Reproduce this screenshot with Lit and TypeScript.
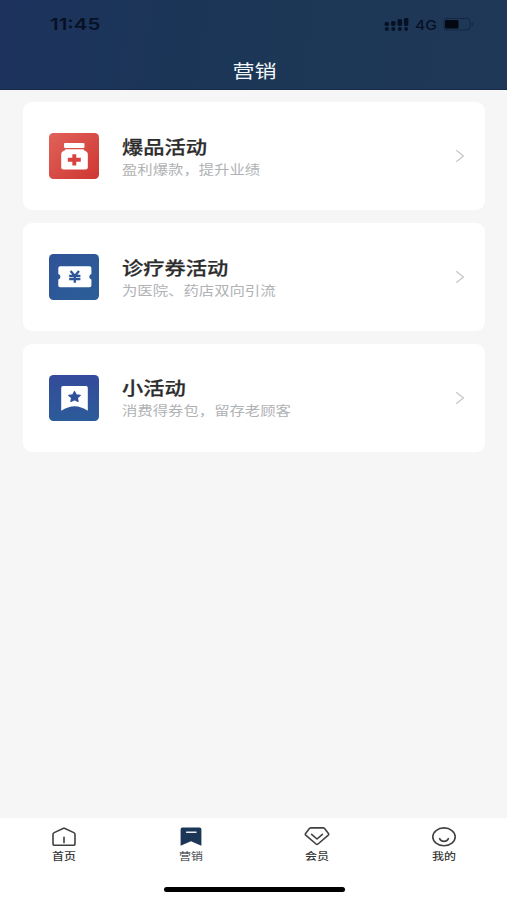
import { LitElement, html, css, svg } from "lit";
import { customElement } from "lit/decorators.js";

const bottle = svg`
  <defs><linearGradient id="r" x1="0" y1="0" x2="1" y2="1"><stop offset="0" stop-color="#e0625a"/><stop offset="1" stop-color="#cf3632"/></linearGradient></defs>
  <rect width="50" height="46" rx="4.5" fill="url(#r)"/>
  <rect x="15" y="10" width="20.5" height="5" rx="1" fill="#fff"/>
  <path d="M16.5 16.3H34.5Q34.5 17.6 36.5 18.1Q38.8 18.9 38.8 21.1V34.5Q38.8 36.6 36.6 36.6H14.4Q12.2 36.6 12.2 34.5V21.1Q12.2 18.9 14.4 18.1Q16.5 17.6 16.5 16.3Z" fill="#fff"/>
  <path d="M25.3 21.2v11.2M18.8 26.8h13" stroke="#d9423e" stroke-width="3.9"/>`;
const ticket = svg`
  <defs><linearGradient id="b" x1="0" y1="0" x2="1" y2="1"><stop offset="0" stop-color="#2f5297"/><stop offset="1" stop-color="#2b5f98"/></linearGradient></defs>
  <rect width="50" height="46" rx="4.5" fill="url(#b)"/>
  <path d="M11.2 12.2H40.5Q42.4 12.2 42.4 14V20A2.9 2.9 0 0 0 42.4 25.6V31.5Q42.4 33.3 40.5 33.3H11.2Q9.3 33.3 9.3 31.5V25.6A2.9 2.9 0 0 0 9.3 20V14Q9.3 12.2 11.2 12.2Z" fill="#fff"/>
  <path d="M21.6 17l4.2 5 4.2-5M20.2 22h11.2M20.2 25.2h11.2M25.8 22v6.8" fill="none" stroke="#2e5597" stroke-width="2.3"/>`;
const flag = svg`
  <defs><linearGradient id="p" x1="0" y1="0" x2="0" y2="1"><stop offset="0" stop-color="#344b9b"/><stop offset="1" stop-color="#2c5b99"/></linearGradient></defs>
  <rect width="50" height="46" rx="4.5" fill="url(#p)"/>
  <path d="M14 11H37Q38.8 11 38.8 12.8V35.8Q32 31.2 25.6 31.2T12.2 35.8V12.8Q12.2 11 14 11Z" fill="#fff"/>
  <path d="M25.5 16.6l1.7 3.2 4.1.5-2.9 2.5.7 3.6-3.6-1.7-3.6 1.7.7-3.6-2.9-2.5 4.1-.5Z" fill="#31529a" stroke="#31529a" stroke-width="1.2" stroke-linejoin="round"/>`;

const home = svg`<path d="M12.6 1.2 3.2 5.6Q2 6.2 2 7.4V16.4Q2 18.2 3.8 18.2H22.2Q24 18.2 24 16.4V7.4Q24 6.2 22.8 5.6L13.4 1.2Q13 1 12.6 1.2Z" /><path d="M13 10.4v5.2"/>`;
const mark = svg`<path d="M4.4 .4H21.6Q23.4 .4 23.4 2.2V18.8L13 14.2L2.6 18.8V2.2Q2.6 .4 4.4 .4Z" fill="#1c3658" stroke="none"/><path d="M8.6 5.3h9.4" stroke="#e8eef4" stroke-width="1.4"/>`;
const gem = svg`<path d="M7 .9H19.2Q20 .9 20.6 1.5L24.6 6.7Q25 7.4 24.3 8.1L14 17Q13 17.8 12 17L1.7 8.1Q1 7.4 1.4 6.7L5.4 1.5Q6 .9 7 .9Z"/><path d="M7.6 7.3 13 12 18.4 7.3"/>`;
const face = svg`<ellipse cx="13" cy="9.8" rx="11.2" ry="8.9"/><path d="M8.6 11.6Q10 14.4 13 14.4T17.4 11.6"/>`;

const entries = [
  { icon: bottle, title: "爆品活动", note: "盈利爆款，提升业绩" },
  { icon: ticket, title: "诊疗券活动", note: "为医院、药店双向引流" },
  { icon: flag, title: "小活动", note: "消费得券包，留存老顾客" },
];
const tabs = [
  { icon: home, label: "首页", on: false },
  { icon: mark, label: "营销", on: true },
  { icon: gem, label: "会员", on: false },
  { icon: face, label: "我的", on: false },
];

@customElement("app-entry")
class AppEntry extends LitElement {
  static properties = { entry: { attribute: false } };
  declare entry: (typeof entries)[number];
  static styles = css`
    :host { display: flex; align-items: center; box-sizing: border-box; height: 108px; padding: 0 20px 0 26px; border-radius: 9px; background: #fff; }
    .tile { width: 50px; height: 46px; flex: none; }
    .copy { flex: 1; margin-left: 22.5px; padding-top: 1px; white-space: nowrap; }
    .title, .note { transform-origin: 0 50%; }
    .title { height: 24px; line-height: 24px; font-size: 17.8px; font-weight: 500; -webkit-text-stroke: .25px #2c2c2c; color: #2c2c2c; transform: scaleX(1.195); }
    .note { height: 22px; line-height: 22px; font-size: 12.8px; font-weight: 400; color: #b0b2b5; transform: scaleX(1.2); }
    .arrow { width: 10px; height: 14px; fill: none; stroke: #c9c9c9; stroke-width: 1.4; }
  `;
  render() {
    return html`
      <svg class="tile" viewBox="0 0 50 46">${this.entry.icon}</svg>
      <div class="copy">
        <div class="title">${this.entry.title}</div>
        <div class="note">${this.entry.note}</div>
      </div>
      <svg class="arrow" viewBox="0 0 10 14"><path d="M1.2 1.2 8.4 7 1.2 12.8"/></svg>`;
  }
}

@customElement("app-root")
class AppRoot extends LitElement {
  static styles = css`
    :host { display: flex; flex-direction: column; width: 507px; height: 900px; overflow: hidden; background: #f6f6f6; font-family: "Noto Sans CJK SC", sans-serif; }
    header { height: 90px; flex: none; box-sizing: border-box; background: linear-gradient(100deg, #1d335d 0%, #1b3656 45%, #203858 100%); border-bottom: 1px solid #182b4b; }
    .status { display: flex; align-items: center; height: 48px; padding: 0 32px 0 50px; color: #071126; font-family: Inter, sans-serif; }
    .time { flex: 1; font-size: 16.5px; font-weight: 600; }
    .time span, .net { display: inline-block; transform-origin: 0 50%; transform: scaleX(1.15); }
    .time span { transform: scaleX(1.24); }
    .signal { width: 25px; height: 14px; fill: #071126; margin-right: 2px; }
    .net { width: 24px; margin: 1px 0 0 4px; font-size: 13.5px; font-weight: 500; line-height: 16px; }
    .battery { width: 32px; height: 14px; margin-left: 4px; }
    .heading { height: 44px; line-height: 44px; text-align: center; font-size: 18.4px; color: #f4f7fa; padding-left: 1px; }
    .heading span { display: inline-block; transform: scaleX(1.195); }
    main { flex: 1; display: flex; flex-direction: column; gap: 12.7px; padding: 12.4px 22.5px 0 23px; }
    nav { height: 82px; flex: none; display: flex; flex-direction: column; align-items: center; background: #fff; }
    .tabs { display: grid; grid-template-columns: repeat(4, 1fr); width: 100%; height: 69.4px; }
    .tab { display: flex; flex-direction: column; align-items: center; padding: 8.5px 0 0 1px; }
    .tab svg { width: 26px; height: 20px; fill: none; stroke: #414141; stroke-width: 1.6; stroke-linecap: round; stroke-linejoin: round; }
    .label { height: 18px; line-height: 18px; font-size: 10px; font-weight: 500; color: #383838; transform: scaleX(1.195); }
    .label.on { color: #5c6065; }
    .bar { width: 181px; height: 5px; margin-left: 1px; border-radius: 3px; background: #000; }
  `;
  render() {
    return html`
      <header>
        <div class="status">
          <div class="time"><span>11:45</span></div>
          <svg class="signal" viewBox="0 0 25 14">
            <rect x="0.5" y="5" width="4.6" height="4" rx="1.7"/><rect x="7" y="4" width="4.6" height="5" rx="1.7"/><rect x="13.5" y="2" width="4.6" height="7" rx="1.7"/><rect x="20" y="1" width="4.4" height="8" rx="1.3"/>
            <circle cx="2.8" cy="12" r="1.9"/><circle cx="9.3" cy="12" r="1.9"/><circle cx="15.8" cy="12" r="1.9"/><circle cx="22.2" cy="12" r="1.9"/>
          </svg>
          <span class="net">4G</span>
          <svg class="battery" viewBox="0 0 32 14">
            <rect x="1" y="1.5" width="26" height="11.5" rx="3.2" fill="none" stroke="#142846" stroke-width="1.2"/>
            <rect x="2" y="3" width="13.5" height="8.5" rx="1.6" fill="#030811"/>
            <path d="M28.7 5q3.2 2.2 0 4.6Z" fill="#142846"/>
          </svg>
        </div>
        <div class="heading"><span>营销</span></div>
      </header>
      <main>${entries.map((e) => html`<app-entry .entry=${e}></app-entry>`)}</main>
      <nav>
        <div class="tabs">
          ${tabs.map((t) => html`<div class="tab"><svg viewBox="0 0 26 20">${t.icon}</svg><div class="label ${t.on ? "on" : ""}">${t.label}</div></div>`)}
        </div>
        <div class="bar"></div>
      </nav>`;
  }
}
